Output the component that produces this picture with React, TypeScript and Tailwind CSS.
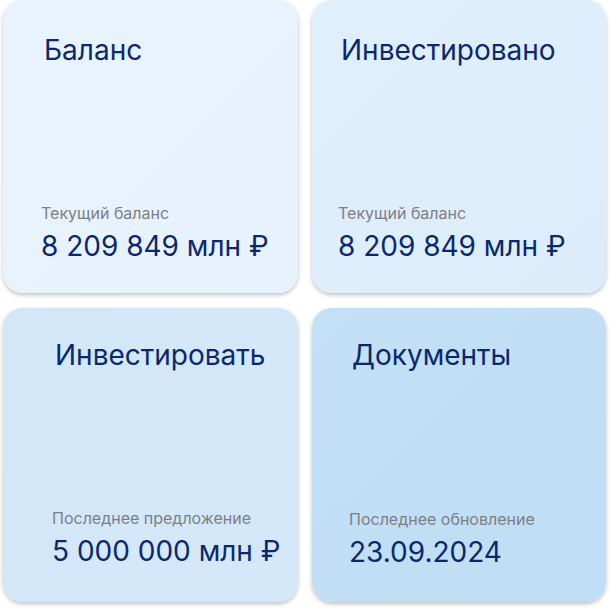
import React from "react";

function Card({
  title,
  label,
  value,
  bg,
  pad,
  tpad,
}: {
  title: string;
  label: string;
  value: string;
  bg: string;
  pad: string;
  tpad: string;
}) {
  return (
    <div
      className={`flex flex-col rounded-[20px] shadow-[0_2px_4px_rgba(0,0,0,0.25)] ${bg} ${pad}`}
    >
      <div className={`text-[28px] leading-[32px] font-normal text-[#0a2870] ${tpad}`}>
        {title}
      </div>
      <div className="flex-1" />
      <div className="text-[16px] leading-[19px] text-[#7d7f85]">{label}</div>
      <div className="mt-[7px] text-[28px] leading-[32px] font-normal text-[#0a2870]">
        {value}
      </div>
    </div>
  );
}

export default function App() {
  return (
    <div
      className="w-[610px] h-[610px] bg-white pl-[3px] pt-0"
      style={{ fontFamily: "Inter, 'Noto Sans', sans-serif" }}
    >
      <div className="grid grid-cols-[295px_294px] grid-rows-[293px_294px] gap-x-[14px] gap-y-[15px]">
        <Card
          title="Баланс"
          label="Текущий баланс"
          value="8 209 849 млн ₽"
          bg="bg-gradient-to-br from-[#e9f3fd] to-[#e7f2fc]"
          pad="pl-[38px] pt-[34px] pb-[31px]"
          tpad="ml-[3px]"
        />
        <Card
          title="Инвестировано"
          label="Текущий баланс"
          value="8 209 849 млн ₽"
          bg="bg-gradient-to-br from-[#e0effc] to-[#ddecfa]"
          pad="pl-[26px] pt-[34px] pb-[31px]"
          tpad="ml-[3px]"
        />
        <Card
          title="Инвестировать"
          label="Последнее предложение"
          value="5 000 000 млн ₽"
          bg="bg-gradient-to-br from-[#d2e7f8] to-[#d5e8f9]"
          pad="pl-[49px] pt-[31px] pb-[35px]"
          tpad="ml-[3px]"
        />
        <Card
          title="Документы"
          label="Последнее обновление"
          value="23.09.2024"
          bg="bg-gradient-to-br from-[#c3e0f6] to-[#bfddf4]"
          pad="pl-[37px] pt-[31px] pb-[34px]"
          tpad="ml-[3px]"
        />
      </div>
    </div>
  );
}
